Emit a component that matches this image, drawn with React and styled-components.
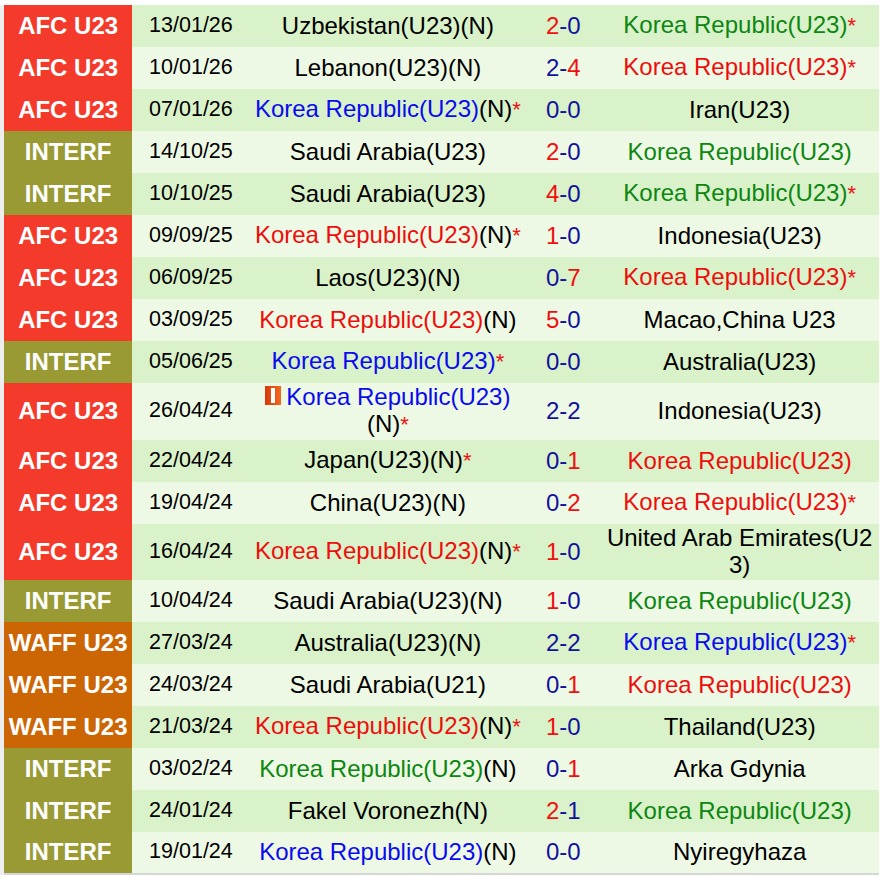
import React from "react";
import styled, { createGlobalStyle } from "styled-components";

const GlobalStyle = createGlobalStyle`
  html, body {
    margin: 0;
    padding: 0;
    background: #ffffff;
  }
  body {
    font-family: "Liberation Sans", Arial, sans-serif;
  }
`;

const COMP_COLORS = {
  "AFC U23": "#f43a2b",
  INTERF: "#9a9a35",
  "WAFF U23": "#cc6503",
};

const TEAM_COLORS = {
  black: "#000000",
  blue: "#0a0aef",
  red: "#ee0d0d",
  green: "#0d8612",
};

// side: [name, colour, neutral, star]
const matches = [
  { comp: "AFC U23", date: "13/01/26", home: ["Uzbekistan(U23)", "black", true, false], score: [2, 0], away: ["Korea Republic(U23)", "green", false, true] },
  { comp: "AFC U23", date: "10/01/26", home: ["Lebanon(U23)", "black", true, false], score: [2, 4], away: ["Korea Republic(U23)", "red", false, true] },
  { comp: "AFC U23", date: "07/01/26", home: ["Korea Republic(U23)", "blue", true, true], score: [0, 0], away: ["Iran(U23)", "black", false, false] },
  { comp: "INTERF", date: "14/10/25", home: ["Saudi Arabia(U23)", "black", false, false], score: [2, 0], away: ["Korea Republic(U23)", "green", false, false] },
  { comp: "INTERF", date: "10/10/25", home: ["Saudi Arabia(U23)", "black", false, false], score: [4, 0], away: ["Korea Republic(U23)", "green", false, true] },
  { comp: "AFC U23", date: "09/09/25", home: ["Korea Republic(U23)", "red", true, true], score: [1, 0], away: ["Indonesia(U23)", "black", false, false] },
  { comp: "AFC U23", date: "06/09/25", home: ["Laos(U23)", "black", true, false], score: [0, 7], away: ["Korea Republic(U23)", "red", false, true] },
  { comp: "AFC U23", date: "03/09/25", home: ["Korea Republic(U23)", "red", true, false], score: [5, 0], away: ["Macao,China U23", "black", false, false] },
  { comp: "INTERF", date: "05/06/25", home: ["Korea Republic(U23)", "blue", false, true], score: [0, 0], away: ["Australia(U23)", "black", false, false] },
  { comp: "AFC U23", date: "26/04/24", home: ["Korea Republic(U23)", "blue", true, true], score: [2, 2], away: ["Indonesia(U23)", "black", false, false], flag: true },
  { comp: "AFC U23", date: "22/04/24", home: ["Japan(U23)", "black", true, true], score: [0, 1], away: ["Korea Republic(U23)", "red", false, false] },
  { comp: "AFC U23", date: "19/04/24", home: ["China(U23)", "black", true, false], score: [0, 2], away: ["Korea Republic(U23)", "red", false, true] },
  { comp: "AFC U23", date: "16/04/24", home: ["Korea Republic(U23)", "red", true, true], score: [1, 0], away: ["United Arab Emirates(U23)", "black", false, false] },
  { comp: "INTERF", date: "10/04/24", home: ["Saudi Arabia(U23)", "black", true, false], score: [1, 0], away: ["Korea Republic(U23)", "green", false, false] },
  { comp: "WAFF U23", date: "27/03/24", home: ["Australia(U23)", "black", true, false], score: [2, 2], away: ["Korea Republic(U23)", "blue", false, true] },
  { comp: "WAFF U23", date: "24/03/24", home: ["Saudi Arabia(U21)", "black", false, false], score: [0, 1], away: ["Korea Republic(U23)", "red", false, false] },
  { comp: "WAFF U23", date: "21/03/24", home: ["Korea Republic(U23)", "red", true, true], score: [1, 0], away: ["Thailand(U23)", "black", false, false] },
  { comp: "INTERF", date: "03/02/24", home: ["Korea Republic(U23)", "green", true, false], score: [0, 1], away: ["Arka Gdynia", "black", false, false] },
  { comp: "INTERF", date: "24/01/24", home: ["Fakel Voronezh", "black", true, false], score: [2, 1], away: ["Korea Republic(U23)", "green", false, false] },
  { comp: "INTERF", date: "19/01/24", home: ["Korea Republic(U23)", "blue", true, false], score: [0, 0], away: ["Nyiregyhaza", "black", false, false] },
];

const CardIcon = () => (
  <svg width="16" height="19" viewBox="0 0 16 19" style={{ verticalAlign: "0px", marginRight: 5 }}>
    <defs>
      <linearGradient id="cardGrad" x1="0" y1="0" x2="1" y2="0">
        <stop offset="0" stopColor="#d8360c" />
        <stop offset="1" stopColor="#f26a1e" />
      </linearGradient>
    </defs>
    <rect x="0" y="0" width="16" height="19" fill="url(#cardGrad)" />
    <rect x="6" y="2" width="4" height="15" fill="#ffffff" />
  </svg>
);

const Team = ({ side, flag }) => {
  const [name, colour, neutral, star] = side;
  return (
    <>
      {flag && <CardIcon />}
      <TeamName $color={TEAM_COLORS[colour]}>{name}</TeamName>
      {neutral && <Neutral>(N)</Neutral>}
      {star && <Star>*</Star>}
    </>
  );
};

const App = () => {
  return (
    <>
      <GlobalStyle />
      <Page>
        <Table>
          <colgroup>
            <col style={{ width: 130 }} />
            <col style={{ width: 117 }} />
            <col style={{ width: 276 }} />
            <col style={{ width: 74 }} />
            <col style={{ width: 278 }} />
          </colgroup>
          <tbody>
            {matches.map((m, i) => {
              const [h, a] = m.score;
              return (
                <Row key={i} $alt={i % 2 === 1}>
                  <CompCell $bg={COMP_COLORS[m.comp]}>{m.comp}</CompCell>
                  <DateCell>{m.date}</DateCell>
                  <TeamCell>
                    <Team side={m.home} flag={m.flag} />
                  </TeamCell>
                  <ScoreCell>
                    <Goal $win={h > a}>{h}</Goal>-<Goal $win={a > h}>{a}</Goal>
                  </ScoreCell>
                  <AwayCell>
                    <Team side={m.away} />
                  </AwayCell>
                </Row>
              );
            })}
          </tbody>
        </Table>
      </Page>
    </>
  );
};

const Page = styled.div`
  width: 880px;
  padding-top: 5px;
  background: #ffffff;
`;

const Table = styled.table`
  width: 879px;
  table-layout: fixed;
  border-collapse: collapse;
  border-spacing: 0;
  border-left: 4px solid #eeeeee;
  border-bottom: 2px solid #d6d6d6;
  font-size: 24px;
  line-height: 27px;
`;

const Row = styled.tr`
  height: 42px;
  background-color: ${(p) => (p.$alt ? "#eef9e5" : "#d9f2c9")};
`;

const Cell = styled.td`
  padding: 0 2px 2px;
  text-align: center;
  vertical-align: middle;
  color: #000000;
`;

const CompCell = styled(Cell)`
  background-color: ${(p) => p.$bg};
  color: #ffffff;
  font-weight: bold;
  white-space: nowrap;
`;

const DateCell = styled(Cell)`
  font-size: 21.5px;
`;

const TeamCell = styled(Cell)``;

const AwayCell = styled(Cell)`
  word-break: break-all;
`;

const ScoreCell = styled(Cell)`
  color: #12129c;
  white-space: nowrap;
`;

const Goal = styled.span`
  color: ${(p) => (p.$win ? "#f00f0f" : "#12129c")};
`;

const TeamName = styled.span`
  color: ${(p) => p.$color};
`;

const Neutral = styled.span`
  color: #000000;
`;

const Star = styled.span`
  color: #ee1111;
  font-size: 22px;
`;

export default App;
